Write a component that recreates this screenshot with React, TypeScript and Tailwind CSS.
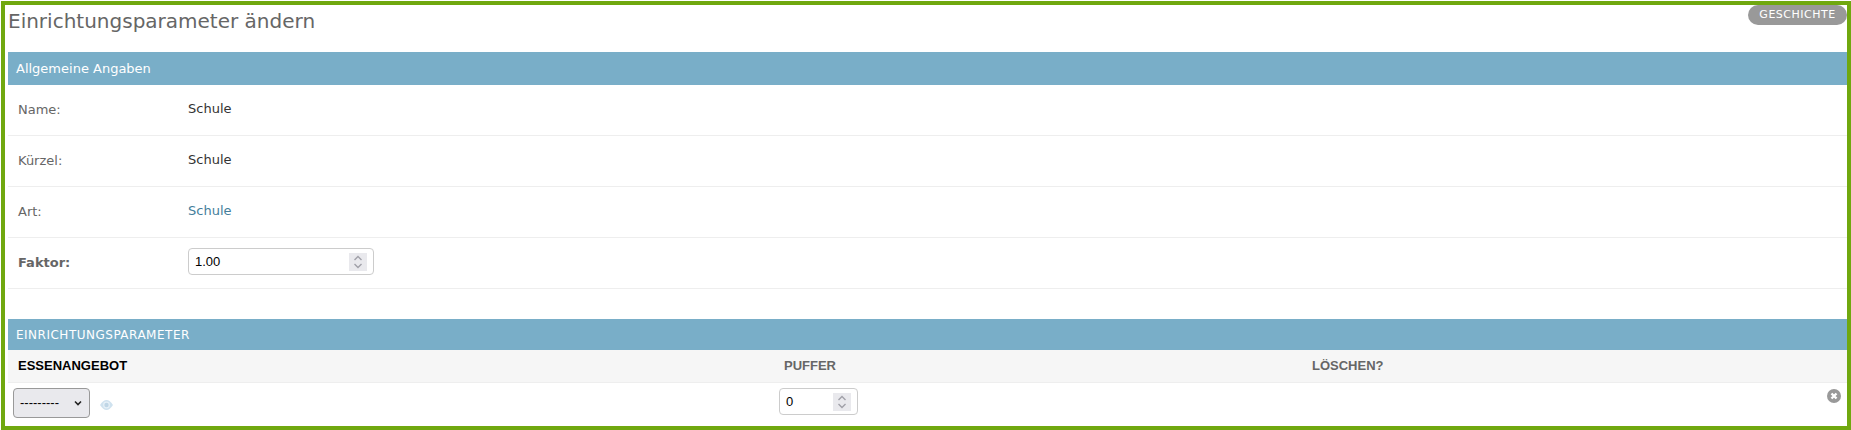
const labelCls = "w-[170px] text-[13px] text-[#666]"

function Spinner() {
  return (
    <span className="flex h-[18px] w-[18px] items-center justify-center bg-[#e9e9ed]">
      <svg width="10" height="16" viewBox="0 0 10 16" fill="none" stroke="#a0a0a8" strokeWidth="1.4">
        <path d="M1.5 6 L5 2.5 L8.5 6" />
        <path d="M1.5 10 L5 13.5 L8.5 10" />
      </svg>
    </span>
  )
}

function NumberBox({ value, width }: { value: string; width: string }) {
  return (
    <div className={`flex h-[27px] items-center justify-between rounded border border-[#ccc] bg-white pl-[6px] pr-[6px] font-['Liberation_Sans',sans-serif] text-[13px] text-black ${width}`}>
      <span>{value}</span>
      <Spinner />
    </div>
  )
}

function Row({ label, children }: { label: string; children: React.ReactNode }) {
  return (
    <div className="flex h-[51px] items-center border-b border-[#eee] pl-[10px]">
      <div className={labelCls}>{label}</div>
      <div className="pb-[2px] text-[13px] text-[#333]">{children}</div>
    </div>
  )
}

export default function App() {
  return (
    <div className="h-[430px] overflow-hidden bg-white pt-px pl-px font-['DejaVu_Sans',sans-serif]">
      <div className="relative h-[429px] w-[1850px] border-4 border-[#70a80f] pl-[3px]">
        <div className="flex h-[47px] items-start">
          <h1 className="pt-[1px] text-[20px] font-normal text-[#666]">Einrichtungsparameter ändern</h1>
          <a className="absolute right-0 top-0 flex h-[20px] w-[99px] items-center justify-center rounded-[15px] bg-[#999] text-[11px] tracking-[0.5px] text-white">
            GESCHICHTE
          </a>
        </div>

        <div className="flex h-[33px] items-center bg-[#79aec8] pl-[8px] text-[13px] text-white">Allgemeine Angaben</div>
        <Row label="Name:">Schule</Row>
        <Row label="Kürzel:">Schule</Row>
        <Row label="Art:">
          <span className="text-[#447e9b]">Schule</span>
        </Row>
        <div className="flex h-[51px] items-start border-b border-[#eee] pl-[10px] pt-[10px]">
          <div className={`${labelCls} pt-[5px] font-bold text-[#333]`}>Faktor:</div>
          <NumberBox value="1.00" width="w-[186px]" />
        </div>

        <div className="mt-[30px] flex h-[31px] items-center bg-[#79aec8] pl-[8px] text-[12px] tracking-[0.5px] text-white">EINRICHTUNGSPARAMETER</div>
        <div className="flex h-[33px] items-center border-b border-[#eee] bg-[#f6f6f6] font-['Liberation_Sans',sans-serif] text-[13px] font-bold text-[#666]">
          <div className="w-[771px] pl-[10px] text-black">ESSENANGEBOT</div>
          <div className="w-[528px] pl-[5px]">PUFFER</div>
          <div className="pl-[5px]">LÖSCHEN?</div>
        </div>
        <div className="relative flex pt-[5px]">
          <div className="flex w-[771px] items-center pl-[5px]">
            <div className="flex h-[30px] w-[77px] items-center justify-between rounded border border-[#999] bg-[#e9e9ed] px-[6px] font-['Liberation_Sans',sans-serif] text-[13px] text-black">
              <span>---------</span>
              <svg width="10" height="10" viewBox="0 0 10 10" fill="none" stroke="#222" strokeWidth="1.6">
                <path d="M2 3.5 L5 6.5 L8 3.5" />
              </svg>
            </div>
            <svg className="ml-[10px] mt-[4px]" width="13" height="10" viewBox="0 0 13 10">
              <path d="M0 5 Q6.5 -5 13 5 Q6.5 15 0 5 Z" fill="#cfe2ef" />
              <circle cx="6.5" cy="5" r="3.4" fill="#e6f0f7" />
              <circle cx="6.5" cy="5" r="2.2" fill="#bfd6e6" />
            </svg>
          </div>
          <NumberBox value="0" width="w-[79px]" />
          <svg className="absolute right-[6px] top-[6px]" width="14" height="14" viewBox="0 0 14 14">
            <circle cx="7" cy="7" r="7" fill="#999" />
            <path d="M4.5 4.5 L9.5 9.5 M9.5 4.5 L4.5 9.5" stroke="#fff" strokeWidth="2.4" />
          </svg>
        </div>
      </div>
    </div>
  )
}
